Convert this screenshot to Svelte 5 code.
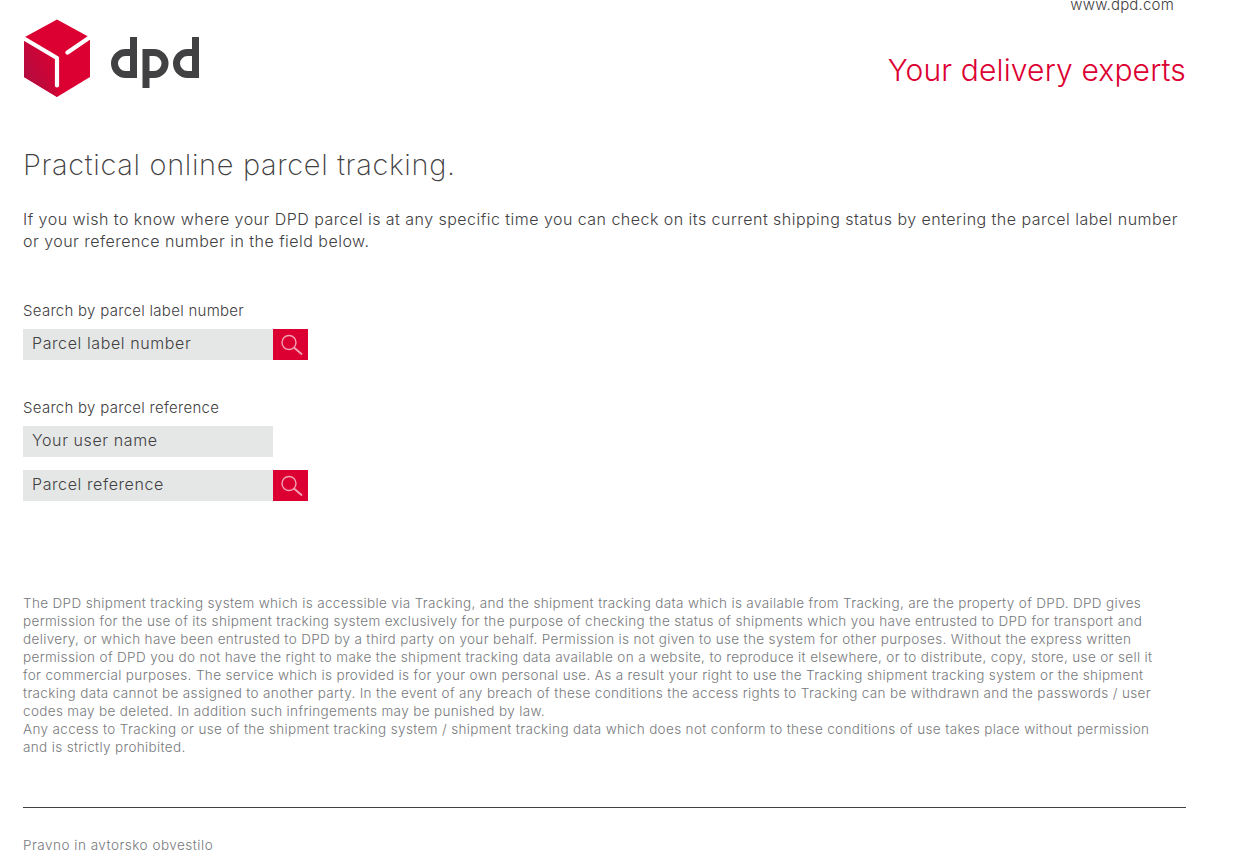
<script>
  const legal = [
    "The DPD shipment tracking system which is accessible via Tracking, and the shipment tracking data which is available from Tracking, are the property of DPD. DPD gives permission for the use of its shipment tracking system exclusively for the purpose of checking the status of shipments which you have entrusted to DPD for transport and delivery, or which have been entrusted to DPD by a third party on your behalf. Permission is not given to use the system for other purposes. Without the express written permission of DPD you do not have the right to make the shipment tracking data available on a website, to reproduce it elsewhere, or to distribute, copy, store, use or sell it for commercial purposes. The service which is provided is for your own personal use. As a result your right to use the Tracking shipment tracking system or the shipment tracking data cannot be assigned to another party. In the event of any breach of these conditions the access rights to Tracking can be withdrawn and the passwords / user codes may be deleted. In addition such infringements may be punished by law.",
    "Any access to Tracking or use of the shipment tracking system / shipment tracking data which does not conform to these conditions of use takes place without permission and is strictly prohibited."
  ];
</script>

{#snippet searchIcon()}
  <svg width="24" height="24" viewBox="0 0 24 24" fill="none" stroke="#f4a3b6" aria-hidden="true">
    <circle cx="10" cy="9.500" r="7" stroke-width="1.400" />
    <path d="M15.500 15 22.500 21" stroke-width="1.800" stroke-linecap="round" />
  </svg>
{/snippet}

<div class="page">
  <header>
    <a class="site-link" href="#top">www.dpd.com</a>
    <div class="brand-row">
      <svg class="logo" width="178" height="80" viewBox="23 19 178 80" aria-label="DPD">
        <defs>
          <linearGradient id="side" x1="0" y1="1" x2="0.9" y2="0.2">
            <stop offset="0" stop-color="#a90f42" />
            <stop offset="1" stop-color="#dc0032" />
          </linearGradient>
        </defs>
        <path d="M57 19.500 90 37.500V77L57 97 24 77V37.500Z" fill="#dc0032" />
        <path d="M24 38 57 58V97L24 77Z" fill="url(#side)" />
        <path d="M24 38.500 57 58V85.500M89.500 37.500 67.500 52.500" fill="none" stroke="#fff" stroke-width="4.200" stroke-linecap="round" stroke-linejoin="round" />
        <g fill="none" stroke="#414042" stroke-width="7">
          <path d="M133.500 37V74.500H125.500A11 11 0 0 1 125.500 52.500H133.500" />
          <path d="M146 88V52.500H154A11 11 0 0 1 154 74.500H146" />
          <path d="M195.500 37V74.500H187.500A11 11 0 0 1 187.500 52.500H195.500" />
        </g>
      </svg>
      <div class="tagline">Your delivery experts</div>
    </div>
  </header>

  <main>
    <h1>Practical online parcel tracking.</h1>
    <p class="intro">If you wish to know where your DPD parcel is at any specific time you can check on its current shipping status by entering the parcel label number or your reference number in the field below.</p>

    <section class="search first">
      <label for="parcel">Search by parcel label number</label>
      <div class="field">
        <input id="parcel" placeholder="Parcel label number" />
        <button type="button" aria-label="Search">{@render searchIcon()}</button>
      </div>
    </section>

    <section class="search second">
      <label for="user">Search by parcel reference</label>
      <div class="field"><input id="user" placeholder="Your user name" /></div>
      <div class="field">
        <input placeholder="Parcel reference" />
        <button type="button" aria-label="Search">{@render searchIcon()}</button>
      </div>
    </section>

    <div class="legal">
      {#each legal as para}
        <p>{para}</p>
      {/each}
    </div>
  </main>

  <footer>
    <a href="#legal">Pravno in avtorsko obvestilo</a>
  </footer>
</div>

<style>
  :global(body) {
    background: #fff;
  }

  .page {
    width: 1163px;
    height: 868px;
    overflow: hidden;
    padding-left: 23px;
    font-family: Inter, "Noto Sans", sans-serif;
    color: #414042;
  }

  .site-link {
    display: block;
    height: 20px;
    margin-top: -4px;
    padding-right: 12px;
    text-align: right;
    font-size: 15px;
    font-weight: 300;
    letter-spacing: 0.2px;
    line-height: 18px;
    color: #414042;
    text-decoration: none;
  }

  .brand-row {
    display: flex;
    justify-content: space-between;
    align-items: flex-start;
    margin-top: 3px;
  }

  .logo {
    display: block;
  }

  .tagline {
    margin-top: 33px;
    font-size: 30px;
    font-weight: 300;
    letter-spacing: 0.15px;
    line-height: 36px;
    color: #dc0032;
  }

  h1 {
    margin: 48px 0 0;
    font-size: 29px;
    font-weight: 200;
    letter-spacing: 0.65px;
    line-height: 36px;
  }

  .intro {
    width: 1163px;
    margin: 25px 0 0;
    font-size: 16px;
    font-weight: 300;
    letter-spacing: 0.47px;
    line-height: 22px;
  }

  .search label {
    display: block;
    font-size: 15px;
    font-weight: 300;
    letter-spacing: 0.28px;
    line-height: 18px;
    margin-bottom: 9px;
  }

  .search.first {
    margin-top: 50px;
  }

  .search.second {
    margin-top: 39px;
  }

  .field {
    display: flex;
    height: 31px;
    margin-bottom: 13px;
  }

  input {
    box-sizing: border-box;
    width: 250px;
    height: 31px;
    padding: 0 9px 3px;
    border: 0;
    background: #e5e7e6;
    font-family: inherit;
    font-size: 16px;
    font-weight: 300;
    letter-spacing: 0.6px;
  }

  input::placeholder {
    color: #414042;
    opacity: 1;
  }

  button {
    display: grid;
    place-items: center;
    width: 35px;
    height: 31px;
    padding: 0;
    border: 0;
    background: #dc0032;
  }

  .legal {
    width: 1147px;
    margin-top: 93px;
    font-size: 13.500px;
    font-weight: 300;
    letter-spacing: 0.35px;
    line-height: 18px;
    color: #77797c;
  }

  .legal p {
    margin: 0;
  }

  footer {
    margin-top: 51px;
    padding-top: 28px;
    border-top: 1px solid #414042;
    font-size: 13.500px;
    font-weight: 300;
    letter-spacing: 0.5px;
    line-height: 18px;
  }

  footer a {
    color: #77797c;
    text-decoration: none;
  }
</style>
